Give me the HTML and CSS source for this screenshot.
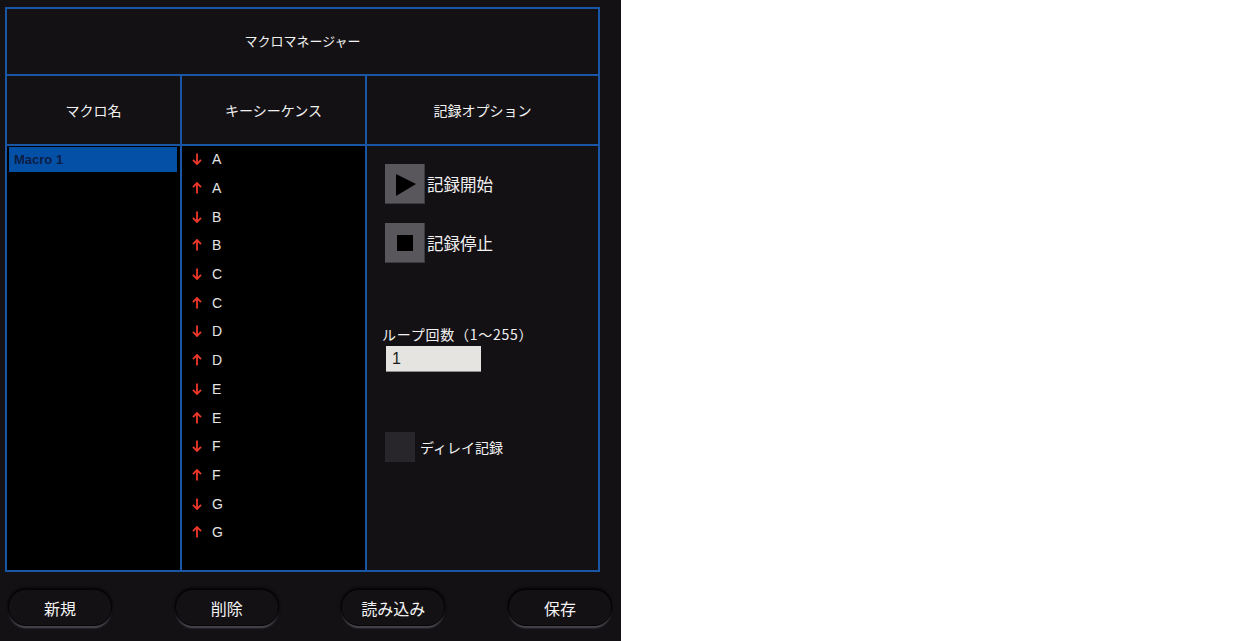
FILE: index.html
```html
<!DOCTYPE html>
<html lang="ja">
<head>
<meta charset="utf-8">
<title>マクロマネージャー</title>
<link rel="stylesheet" href="styles.css">
</head>
<body>
<div class="app">
  <div class="grid">
    <div class="title">マクロマネージャー</div>
    <div class="hdr">マクロ名</div>
    <div class="hdr">キーシーケンス</div>
    <div class="hdr">記録オプション</div>

    <div class="col-names">
      <div class="macro sel">Macro 1</div>
    </div>

    <div class="col-seq">
      <div class="key"><svg class="arr" viewBox="0 0 10 12"><path d="M5 0.5V11M1 6.8L5 11L9 6.8"/></svg><span>A</span></div>
      <div class="key"><svg class="arr" viewBox="0 0 10 12"><path d="M5 11.5V1M1 5.2L5 1L9 5.2"/></svg><span>A</span></div>
      <div class="key"><svg class="arr" viewBox="0 0 10 12"><path d="M5 0.5V11M1 6.8L5 11L9 6.8"/></svg><span>B</span></div>
      <div class="key"><svg class="arr" viewBox="0 0 10 12"><path d="M5 11.5V1M1 5.2L5 1L9 5.2"/></svg><span>B</span></div>
      <div class="key"><svg class="arr" viewBox="0 0 10 12"><path d="M5 0.5V11M1 6.8L5 11L9 6.8"/></svg><span>C</span></div>
      <div class="key"><svg class="arr" viewBox="0 0 10 12"><path d="M5 11.5V1M1 5.2L5 1L9 5.2"/></svg><span>C</span></div>
      <div class="key"><svg class="arr" viewBox="0 0 10 12"><path d="M5 0.5V11M1 6.8L5 11L9 6.8"/></svg><span>D</span></div>
      <div class="key"><svg class="arr" viewBox="0 0 10 12"><path d="M5 11.5V1M1 5.2L5 1L9 5.2"/></svg><span>D</span></div>
      <div class="key"><svg class="arr" viewBox="0 0 10 12"><path d="M5 0.5V11M1 6.8L5 11L9 6.8"/></svg><span>E</span></div>
      <div class="key"><svg class="arr" viewBox="0 0 10 12"><path d="M5 11.5V1M1 5.2L5 1L9 5.2"/></svg><span>E</span></div>
      <div class="key"><svg class="arr" viewBox="0 0 10 12"><path d="M5 0.5V11M1 6.8L5 11L9 6.8"/></svg><span>F</span></div>
      <div class="key"><svg class="arr" viewBox="0 0 10 12"><path d="M5 11.5V1M1 5.2L5 1L9 5.2"/></svg><span>F</span></div>
      <div class="key"><svg class="arr" viewBox="0 0 10 12"><path d="M5 0.5V11M1 6.8L5 11L9 6.8"/></svg><span>G</span></div>
      <div class="key"><svg class="arr" viewBox="0 0 10 12"><path d="M5 11.5V1M1 5.2L5 1L9 5.2"/></svg><span>G</span></div>
    </div>

    <div class="col-opt">
      <div class="rec">
        <div class="rec-box"><svg class="ico" viewBox="0 0 40 40"><path d="M11 10L31 20L11 32Z"/></svg></div>
        <span class="rec-label">記録開始</span>
      </div>
      <div class="rec rec-stop">
        <div class="rec-box"><svg class="ico" viewBox="0 0 40 40"><rect x="12" y="12" width="16" height="16"/></svg></div>
        <span class="rec-label">記録停止</span>
      </div>
      <div class="loop-label">ループ回数（1〜255）</div>
      <div class="loop-input">1</div>
      <div class="delay">
        <div class="check"></div>
        <span class="delay-label">ディレイ記録</span>
      </div>
    </div>
  </div>

  <div class="actions">
    <div class="btn">新規</div>
    <div class="btn">削除</div>
    <div class="btn">読み込み</div>
    <div class="btn">保存</div>
  </div>
</div>
</body>
</html>
```

FILE: styles.css
```css
html, body {
  margin: 0;
  padding: 0;
  background: #ffffff;
}

.app {
  width: 621px;
  height: 641px;
  box-sizing: border-box;
  background: #141115;
  padding: 7px 0 0 5px;
  font-family: "Noto Sans CJK JP", "Liberation Sans", sans-serif;
  color: #f2f2f2;
}

.grid {
  display: grid;
  grid-template-columns: 173px 183px 231px;
  grid-template-rows: 65px 68px 424px;
  gap: 2px;
  padding: 2px;
  width: 591px;
  background: #1a56a6;
}

.title {
  grid-column: 1 / 4;
  background: #141115;
  display: flex;
  align-items: center;
  justify-content: center;
  font-size: 13px;
  padding-bottom: 2px;
}

.hdr {
  background: #141115;
  display: flex;
  align-items: center;
  justify-content: center;
  font-size: 14px;
}

.col-names {
  background: #000000;
  padding: 1px 0 0 2px;
}

.macro {
  width: 168px;
  height: 25px;
  box-sizing: border-box;
  padding-left: 5px;
  display: flex;
  align-items: center;
  font-family: "Liberation Sans", sans-serif;
  font-weight: bold;
  font-size: 13px;
}

.macro.sel {
  background: #0550a7;
  color: #0b1d45;
}

.col-seq {
  background: #000000;
  padding: 0 0 0 10px;
}

.key {
  height: 28.7px;
  display: flex;
  align-items: center;
  gap: 10px;
  font-family: "Liberation Sans", sans-serif;
  font-size: 14px;
  color: #e4e4e4;
}

.key:first-child {
  margin-top: -1px;
}

.arr {
  width: 10px;
  height: 12px;
  fill: none;
  stroke: #f2382b;
  stroke-width: 1.8;
}

.col-opt {
  background: #141115;
  padding: 18px 0 0 18px;
}

.rec {
  display: flex;
  align-items: center;
  gap: 2px;
}

.rec-stop {
  margin-top: 19px;
}

.rec-box {
  width: 40px;
  height: 40px;
  background: #5a575c;
  box-shadow: inset -1px -1px 0 #3e3b40;
}

.ico {
  display: block;
  width: 40px;
  height: 40px;
  fill: #000000;
}

.rec-label {
  font-size: 16.5px;
}

.loop-label {
  margin: 61px 0 0 -3px;
  font-size: 14px;
  line-height: 20px;
  letter-spacing: 0.75px;
}

.loop-input {
  margin: 2px 0 0 1px;
  width: 95px;
  height: 26px;
  box-sizing: border-box;
  background: #e5e4e0;
  border-bottom: 1px solid #8e8e8e;
  color: #1c1c1c;
  font-family: "Liberation Sans", sans-serif;
  font-size: 16px;
  line-height: 25px;
  padding-left: 6px;
}

.delay {
  display: flex;
  align-items: center;
  gap: 5px;
  margin-top: 60px;
}

.check {
  width: 30px;
  height: 30px;
  background: #29262b;
}

.delay-label {
  font-size: 14px;
}

.actions {
  display: flex;
  justify-content: space-between;
  padding: 0 9px 0 3px;
  margin-top: 17px;
}

.btn {
  width: 102px;
  height: 35px;
  border-radius: 18px;
  background: #141115;
  border: 1px solid #050405;
  box-shadow: 0 -1px 3px #000000, 0 3px 2px -1px #55525a;
  display: flex;
  align-items: center;
  justify-content: center;
  font-size: 16px;
  color: #f4f4f4;
}
```
